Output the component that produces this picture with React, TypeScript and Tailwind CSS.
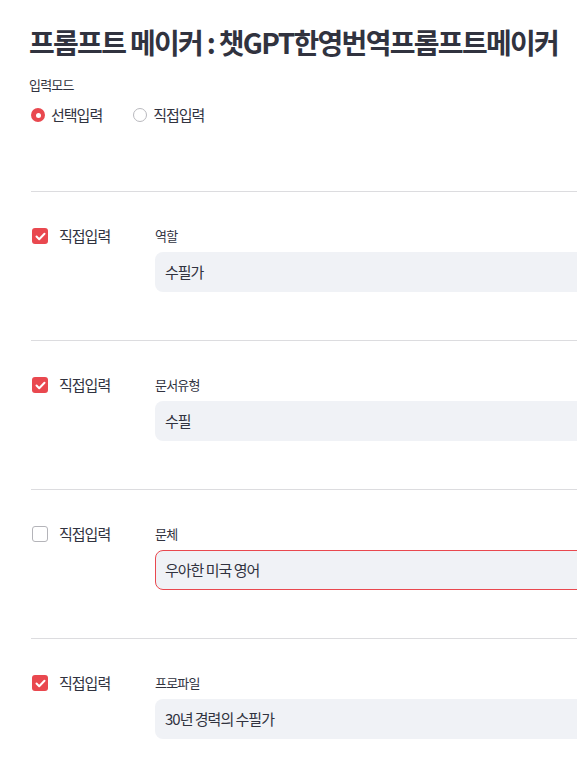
import React from "react";

const FONT = '"Noto Sans CJK KR", "Noto Sans", sans-serif';

type Field = { label: string; value: string; checked: boolean; focused?: boolean };

const fields: Field[] = [
  { label: "역할", value: "수필가", checked: true },
  { label: "문서유형", value: "수필", checked: true },
  { label: "문체", value: "우아한 미국 영어", checked: false, focused: true },
  { label: "프로파일", value: "30년 경력의 수필가", checked: true },
];

function Radio({ on, label }: { on: boolean; label: string }) {
  return (
    <div className="flex items-center gap-[6px] h-6">
      {on ? (
        <span className="w-[14px] h-[14px] rounded-full bg-[#e9484f] flex items-center justify-center">
          <span className="w-[5px] h-[5px] rounded-full bg-white" />
        </span>
      ) : (
        <span className="w-[14px] h-[14px] rounded-full border border-[#b9b9be] bg-white" />
      )}
      <span className="text-[15px] tracking-[-1px] leading-6">{label}</span>
    </div>
  );
}

function Check({ on }: { on: boolean }) {
  return on ? (
    <span className="w-4 h-4 rounded-[3px] bg-[#e9484f] flex items-center justify-center">
      <svg width="11" height="9" viewBox="0 0 11 9" fill="none">
        <path d="M1.5 4.5 L4.2 7.2 L9.5 1.8" stroke="white" strokeWidth="2" strokeLinecap="round" strokeLinejoin="round" />
      </svg>
    </span>
  ) : (
    <span className="w-4 h-4 rounded-[3px] border border-[#b4b4b9] bg-white" />
  );
}

export default function App() {
  return (
    <div className="w-full min-h-screen overflow-hidden bg-white text-[#31333F]" style={{ fontFamily: FONT }}>
      <div className="w-[760px] pl-[31px]">
        <h1 className="mt-[22px] h-10 text-[28px] leading-10 font-bold tracking-[-1.7px] whitespace-nowrap -ml-[2px]">
          프롬프트 메이커 : 챗GPT한영번역프롬프트메이커
        </h1>
        <div className="mt-[13px] text-[13px] leading-5 tracking-[-0.8px] -ml-[2px]">입력모드</div>
        <div className="mt-2 flex items-center gap-[31px]">
          <Radio on label="선택입력" />
          <Radio on={false} label="직접입력" />
        </div>
        <div className="mt-[64px]">
          {fields.map((f) => (
            <div key={f.label}>
              <div className="h-px bg-[#dcdcdf]" />
              <div className="mt-[34px] mb-[48px] flex">
                <div className="w-[124px] shrink-0 flex items-center gap-[11px] h-5 pl-px">
                  <Check on={f.checked} />
                  <span className="text-[15px] tracking-[-1px] leading-5">직접입력</span>
                </div>
                <div className="flex-1">
                  <div className="text-[13px] leading-5 tracking-[-0.8px]">{f.label}</div>
                  <div
                    className={
                      "mt-[6px] h-10 rounded-lg bg-[#f0f2f6] flex items-center px-[9px] border " +
                      (f.focused ? "border-[#e9484f]" : "border-transparent")
                    }
                  >
                    <span className="text-[15px] tracking-[-1px]">{f.value}</span>
                  </div>
                </div>
              </div>
            </div>
          ))}
        </div>
      </div>
    </div>
  );
}
